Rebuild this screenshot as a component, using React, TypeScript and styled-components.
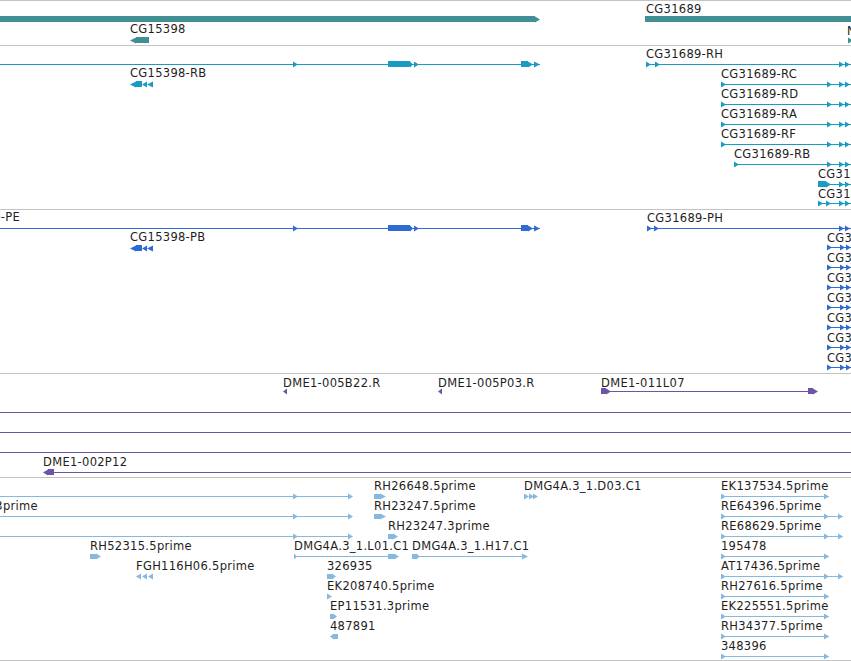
import React from 'react';
import styled, { createGlobalStyle } from 'styled-components';

const GlobalStyle = createGlobalStyle`
  html, body { margin: 0; padding: 0; background: #ffffff; }
  body {
    width: 851px;
    height: 661px;
    overflow: hidden;
    font-family: "DejaVu Sans", "Liberation Sans", sans-serif;
  }
`;

const COLORS = {
  teal: '#418f93',
  cyan: '#1a9bc2',
  blue: '#2f6cd1',
  purple: '#6b55a8',
  light: '#85b9e0',
  sep: '#c3c3c3',
  text: '#1e1e1e',
};

const View = styled.div`
  display: flex;
  flex-direction: column;
  width: 851px;
  border-top: 1px solid ${COLORS.sep};
`;

const TrackBox = styled.section<{ $h: number }>`
  position: relative;
  height: ${(p) => p.$h}px;
  border-bottom: 1px solid ${COLORS.sep};
  overflow: hidden;
`;

const Canvas = styled.svg`
  position: absolute;
  left: 0;
  top: 0;
  display: block;
`;

const Label = styled.span<{ $x?: number; $end?: number; $top: number }>`
  position: absolute;
  top: ${(p) => p.$top}px;
  ${(p) => (p.$end !== undefined ? `right: ${851 - p.$end}px;` : `left: ${p.$x}px;`)}
  font-size: 11.5px;
  line-height: 12px;
  letter-spacing: 0.3px;
  white-space: nowrap;
  color: ${COLORS.text};
`;

type Part =
  | { k: 'l'; x1: number; x2: number; r: number }
  | { k: 'b'; x1: number; x2: number; r: number; h: number }
  | { k: 't'; x: number; r: number; d: number; w: number; h: number };

const ln = (x1: number, x2: number, r: number): Part => ({ k: 'l', x1, x2, r });
const bx = (x1: number, x2: number, r: number, h = 6): Part => ({ k: 'b', x1, x2, r, h });
const tr = (x: number, r: number, d = 1, w = 5, h = 6): Part => ({ k: 't', x, r, d, w, h });

type Lab = { x?: number; end?: number; c: number; t: string };

type TrackSpec = {
  top: number;
  h: number;
  color: string;
  labels: Lab[];
  parts: Part[];
};

const leftGene = (r: number): Part[] => [
  ln(0, 540, r),
  tr(293, r),
  bx(388, 410, r),
  tr(410, r, 1, 3),
  tr(414, r, 1, 5),
  bx(521, 528, r),
  tr(528, r, 1, 5),
  tr(534, r, 1, 6),
];

const smallRev = (r: number): Part[] => [
  tr(136, r, -1, 6),
  bx(136, 142, r),
  tr(147, r, -1, 5),
  tr(153, r, -1, 6),
];

const rightEnds = (r: number): Part[] => [tr(827, r), tr(839, r), tr(845, r)];

const track1: TrackSpec = {
  top: 1,
  h: 44,
  color: COLORS.teal,
  labels: [
    { x: 130, c: 25, t: 'CG15398' },
    { x: 646, c: 5, t: 'CG31689' },
    { x: 847, c: 27, t: 'Nha' },
  ],
  parts: [
    bx(0, 535, 19),
    tr(535, 19, 1, 5),
    bx(645, 851, 19),
    tr(136, 40, -1, 6),
    bx(136, 149, 40),
    tr(848, 40, 1, 5),
  ],
};

const track2: TrackSpec = {
  top: 46,
  h: 163,
  color: COLORS.cyan,
  labels: [
    { x: 130, c: 69, t: 'CG15398-RB' },
    { x: 646, c: 50, t: 'CG31689-RH' },
    { x: 721, c: 70, t: 'CG31689-RC' },
    { x: 721, c: 90, t: 'CG31689-RD' },
    { x: 721, c: 110, t: 'CG31689-RA' },
    { x: 721, c: 130, t: 'CG31689-RF' },
    { x: 734, c: 150, t: 'CG31689-RB' },
    { x: 818, c: 170, t: 'CG31689-RE' },
    { x: 818, c: 190, t: 'CG31689-RG' },
  ],
  parts: [
    ...leftGene(64),
    ...smallRev(84),
    ln(646, 851, 64),
    tr(646, 64),
    tr(655, 64),
    tr(839, 64),
    tr(845, 64),
    ...[84, 104, 124, 144].flatMap((r) => [ln(721, 851, r), tr(721, r), ...rightEnds(r)]),
    ln(734, 851, 164),
    tr(734, 164),
    ...rightEnds(164),
    ln(818, 851, 184),
    bx(818, 826, 184),
    tr(826, 184),
    tr(839, 184),
    tr(845, 184),
    ln(818, 851, 203),
    tr(818, 203),
    tr(826, 203),
    tr(839, 203),
    tr(845, 203),
  ],
};

const pLetters = ['A', 'B', 'C', 'D', 'F', 'G', 'I'];

const track3: TrackSpec = {
  top: 210,
  h: 163,
  color: COLORS.blue,
  labels: [
    { end: 20, c: 213, t: 'CG15400-PE' },
    { x: 130, c: 233, t: 'CG15398-PB' },
    { x: 647, c: 214, t: 'CG31689-PH' },
    ...pLetters.map((l, i) => ({ x: 827, c: 234 + i * 20, t: `CG31689-P${l}` })),
  ],
  parts: [
    ...leftGene(228),
    ...smallRev(248),
    ln(647, 851, 228),
    tr(647, 228),
    tr(654, 228),
    tr(839, 228),
    tr(845, 228),
    ...pLetters.flatMap((_, i) => {
      const r = 247 + i * 20;
      return [ln(827, 851, r), tr(827, r), tr(840, r), tr(846, r)];
    }),
  ],
};

const track4: TrackSpec = {
  top: 374,
  h: 103,
  color: COLORS.purple,
  labels: [
    { x: 283, c: 379, t: 'DME1-005B22.R' },
    { x: 438, c: 379, t: 'DME1-005P03.R' },
    { x: 601, c: 379, t: 'DME1-011L07' },
    { x: 43, c: 458, t: 'DME1-002P12' },
  ],
  parts: [
    tr(287, 391, -1, 4),
    tr(442, 391, -1, 4),
    bx(601, 606, 391),
    tr(606, 391, 1, 5),
    ln(606, 808, 391),
    bx(808, 813, 391),
    tr(813, 391, 1, 5),
    ln(0, 851, 412),
    ln(0, 851, 432),
    ln(0, 851, 452),
    tr(48, 472, -1, 5),
    bx(48, 54, 472),
    ln(54, 851, 472),
  ],
};

const rightEsts = [
  'EK137534.5prime',
  'RE64396.5prime',
  'RE68629.5prime',
  '195478',
  'AT17436.5prime',
  'RH27616.5prime',
  'EK225551.5prime',
  'RH34377.5prime',
  '348396',
];
const extended = new Set([1, 2, 4]);

const track5: TrackSpec = {
  top: 478,
  h: 182,
  color: COLORS.light,
  labels: [
    { end: 38, c: 502, t: 'RH01287.3prime' },
    { x: 90, c: 542, t: 'RH52315.5prime' },
    { x: 136, c: 562, t: 'FGH116H06.5prime' },
    { x: 294, c: 542, t: 'DMG4A.3_1.L01.C1' },
    { x: 412, c: 542, t: 'DMG4A.3_1.H17.C1' },
    { x: 327, c: 562, t: '326935' },
    { x: 327, c: 582, t: 'EK208740.5prime' },
    { x: 330, c: 602, t: 'EP11531.3prime' },
    { x: 330, c: 622, t: '487891' },
    { x: 374, c: 482, t: 'RH26648.5prime' },
    { x: 374, c: 502, t: 'RH23247.5prime' },
    { x: 388, c: 522, t: 'RH23247.3prime' },
    { x: 524, c: 482, t: 'DMG4A.3_1.D03.C1' },
    ...rightEsts.map((t, i) => ({ x: 721, c: 482 + i * 20, t })),
  ],
  parts: [
    ...[496, 516, 536].flatMap((r) => [ln(0, 352, r), tr(293, r), tr(348, r)]),
    bx(90, 96, 556, 5),
    tr(96, 556, 1, 5),
    tr(141, 576, -1, 5),
    tr(147, 576, -1, 5),
    tr(153, 576, -1, 5),
    tr(294, 556, 1, 3),
    ln(294, 390, 556),
    bx(388, 394, 556, 5),
    tr(394, 556, 1, 5),
    bx(412, 416, 556, 5),
    tr(416, 556, 1, 4),
    ln(412, 522, 556),
    tr(522, 556, 1, 6),
    bx(327, 332, 576, 5),
    tr(332, 576, 1, 4),
    tr(327, 596, 1, 5),
    bx(330, 333, 616, 5),
    tr(333, 616, 1, 4),
    tr(334, 636, -1, 4),
    bx(334, 338, 636, 5),
    bx(374, 380, 496, 5),
    tr(380, 496, 1, 6),
    bx(374, 380, 516, 5),
    tr(380, 516, 1, 6),
    bx(388, 393, 536, 5),
    tr(393, 536, 1, 5),
    tr(524, 496),
    tr(529, 496),
    tr(533, 496),
    ...rightEsts.flatMap((_, i) => {
      const r = 496 + i * 20;
      const base: Part[] = [tr(721, r), ln(721, 829, r), tr(824, r)];
      return extended.has(i) ? [...base, ln(829, 843, r), tr(838, r)] : base;
    }),
  ],
};

const tracks = [track1, track2, track3, track4, track5];

function Shape({ p }: { p: Part }) {
  if (p.k === 'l') {
    return <rect x={p.x1} y={p.r} width={p.x2 - p.x1} height={1} shapeRendering="crispEdges" />;
  }
  if (p.k === 'b') {
    return (
      <rect
        x={p.x1}
        y={p.r - Math.floor(p.h / 2)}
        width={p.x2 - p.x1}
        height={p.h}
        shapeRendering="crispEdges"
      />
    );
  }
  const y0 = p.r - p.h / 2 + 0.5;
  const y1 = p.r + p.h / 2 + 0.5;
  const cy = p.r + 0.5;
  return <polygon points={`${p.x},${y0} ${p.x},${y1} ${p.x + p.d * p.w},${cy}`} />;
}

function Track({ spec }: { spec: TrackSpec }) {
  return (
    <TrackBox $h={spec.h}>
      <Canvas
        width={851}
        height={spec.h}
        viewBox={`0 ${spec.top} 851 ${spec.h}`}
        fill={spec.color}
      >
        {spec.parts.map((p, i) => (
          <Shape key={i} p={p} />
        ))}
      </Canvas>
      {spec.labels.map((l, i) => (
        <Label key={i} $x={l.x} $end={l.end} $top={l.c - 2 - spec.top}>
          {l.t}
        </Label>
      ))}
    </TrackBox>
  );
}

export default function App() {
  return (
    <>
      <GlobalStyle />
      <View>
        {tracks.map((t, i) => (
          <Track key={i} spec={t} />
        ))}
      </View>
    </>
  );
}
